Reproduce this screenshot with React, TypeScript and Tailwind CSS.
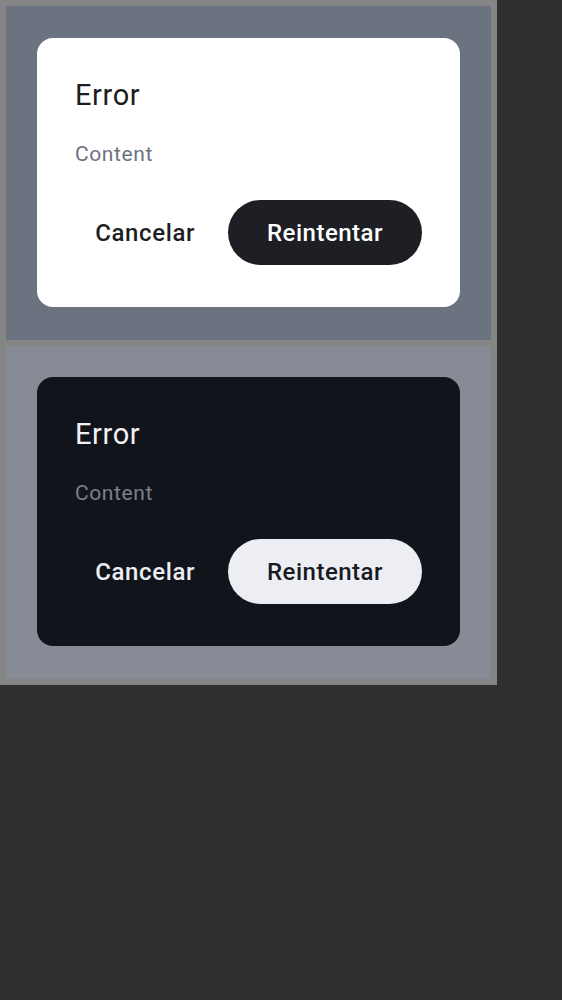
import React from 'react';

interface DialogProps {
  dark?: boolean;
}

function ErrorDialog({ dark }: DialogProps) {
  return (
    <div
      className={
        dark
          ? 'w-[423px] h-[269px] rounded-[16px] bg-[#11141a] pt-[39px] px-[38px]'
          : 'w-[423px] h-[269px] rounded-[16px] bg-white pt-[39px] px-[38px]'
      }
    >
      <h2
        className={
          dark
            ? 'text-[29px] leading-[36px] font-normal tracking-[0.6px] text-[#f1f2f5]'
            : 'text-[29px] leading-[36px] font-normal tracking-[0.6px] text-[#1b1c20]'
        }
      >
        Error
      </h2>
      <p
        className={
          dark
            ? 'mt-[27px] text-[21px] leading-[28px] tracking-[0.6px] text-[#7b808a]'
            : 'mt-[27px] text-[21px] leading-[28px] tracking-[0.6px] text-[#6b7280]'
        }
      >
        Content
      </p>
      <div className="mt-[32px] flex justify-end">
        <button
          className={
            dark
              ? 'shrink-0 h-[65px] px-[33px] text-[24px] font-medium tracking-[0.6px] text-[#eceef3]'
              : 'shrink-0 h-[65px] px-[33px] text-[24px] font-medium tracking-[0.6px] text-[#1d1f24]'
          }
        >
          Cancelar
        </button>
        <button
          className={
            dark
              ? 'shrink-0 h-[65px] w-[194px] rounded-full bg-[#eceef3] text-[24px] font-medium tracking-[0.5px] text-[#181a1f]'
              : 'shrink-0 h-[65px] w-[194px] rounded-full bg-[#1d1f24] text-[24px] font-medium tracking-[0.5px] text-white'
          }
        >
          Reintentar
        </button>
      </div>
    </div>
  );
}

export default function App() {
  return (
    <div
      className="min-h-screen w-full bg-[#303030]"
      style={{ fontFamily: 'Roboto, "Noto Sans", sans-serif' }}
    >
      <div className="w-[497px] bg-[#858585] p-[6px] flex flex-col gap-[6px]">
        <div className="h-[334px] bg-[#6b7280] pt-[32px] pl-[31px]">
          <ErrorDialog />
        </div>
        <div className="h-[333px] bg-[#868b96] pt-[31px] pl-[31px]">
          <ErrorDialog dark />
        </div>
      </div>
    </div>
  );
}
